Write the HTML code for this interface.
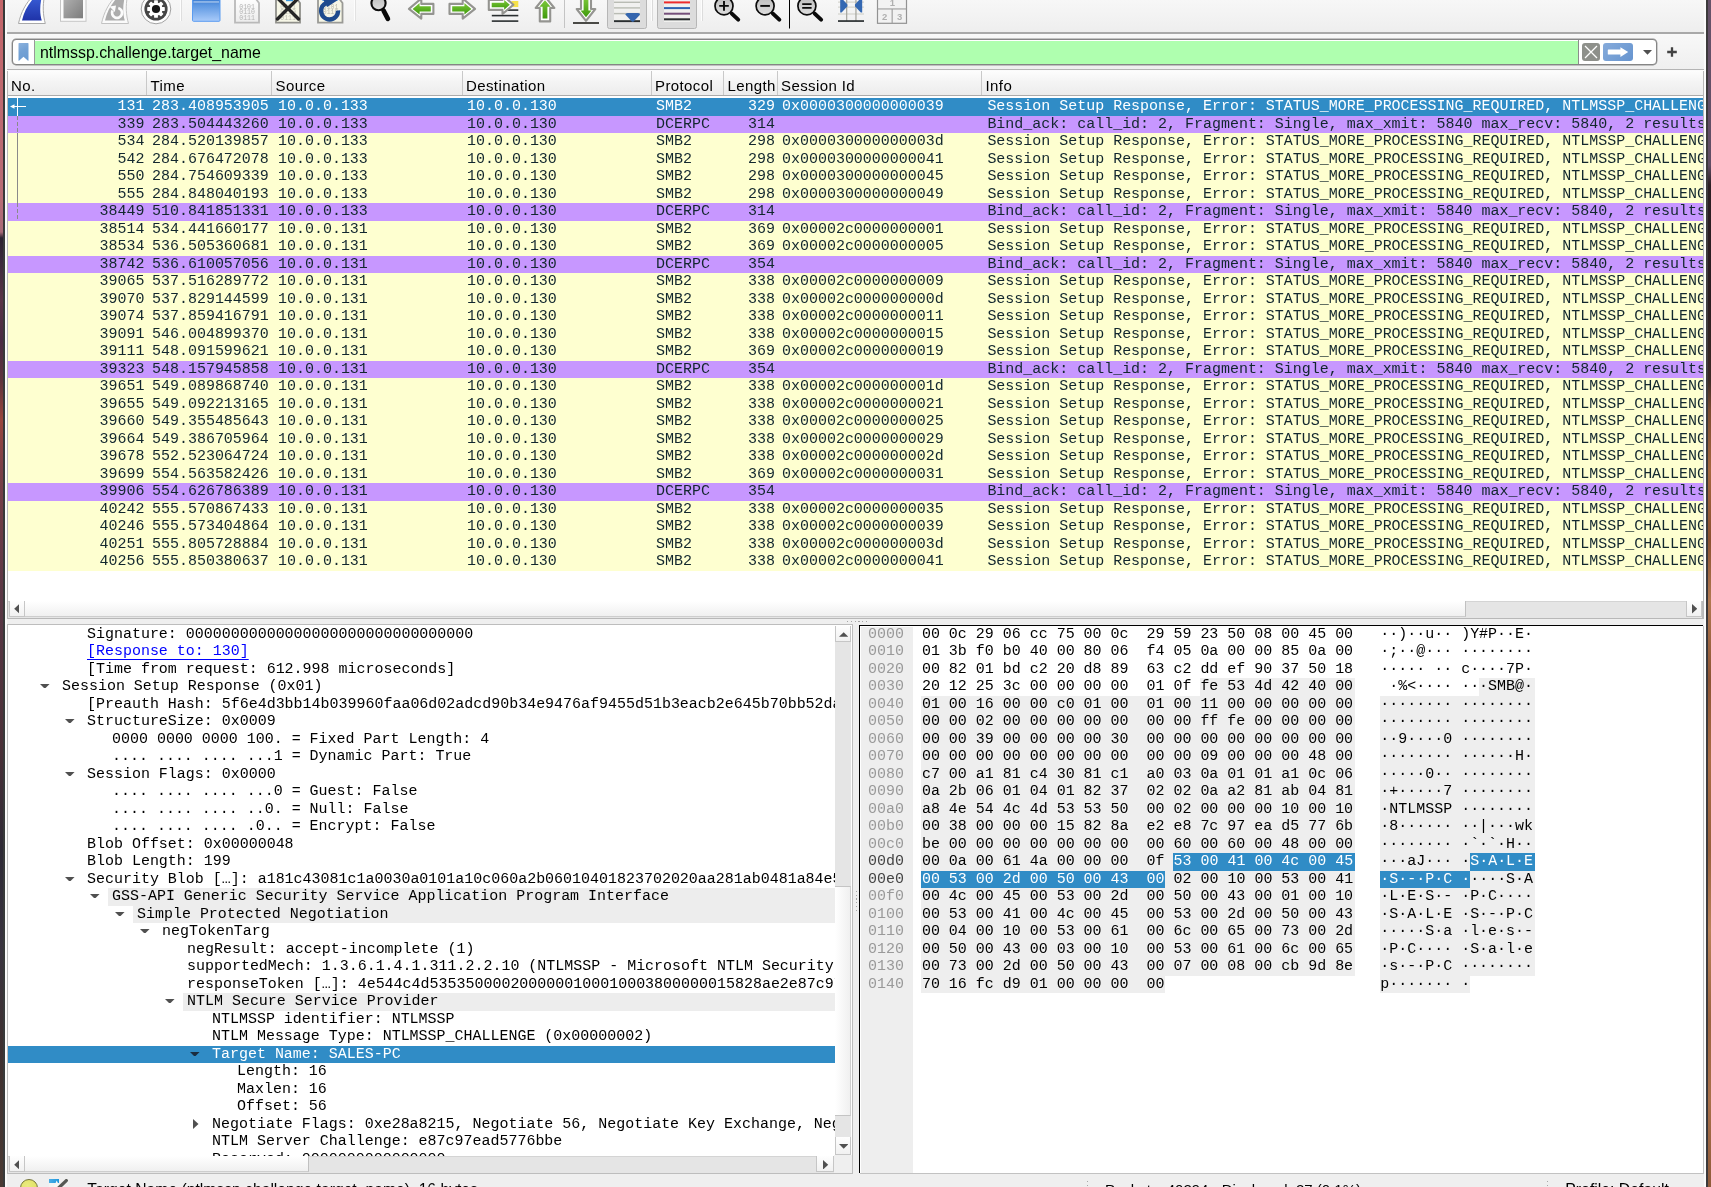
<!DOCTYPE html>
<html><head><meta charset="utf-8"><title>Wireshark</title>
<style>
*{box-sizing:border-box;margin:0;padding:0}
html,body{width:1711px;height:1187px;overflow:hidden;background:#efefef}
body{position:relative;font-family:"Liberation Sans",sans-serif;color:#000}
.abs{position:absolute}
#wl{left:0;top:0;width:3px;height:1187px;background:linear-gradient(#c4666a 0,#b86c76 200px,#a86a78 232px,#2c2232 238px,#3a2a3c 260px,#5a3448 300px,#4a2c44 340px,#5e343e 380px,#9a463e 420px,#7a4048 470px,#5a3846 600px,#4a3038 750px,#2e2a36 850px,#3a3440 950px,#3e3030 1050px,#4a3a34 1187px)}
#bl{left:3px;top:0;width:2px;height:1187px;background:#383a3a}
#bl2{left:5px;top:0;width:1.5px;height:1187px;background:#fbfbfb}
#br2{left:1704px;top:0;width:2px;height:1187px;background:#fbfbfb}
#br{left:1706px;top:0;width:2px;height:1187px;background:#3c3a3c}
#wr{left:1708px;top:0;width:3px;height:1187px;background:linear-gradient(#665269 0,#604c64 165px,#2c1e24 185px,#2a1c20 300px,#3c2a26 380px,#7a4a30 410px,#a4663e 470px,#8a5030 540px,#b07850 600px,#8c5434 680px,#a86c44 760px,#96603c 850px,#b88258 930px,#9a6440 1020px,#a8704a 1100px,#8e5a3a 1187px)}
#tb{left:5px;top:0;width:1701px;height:32px;background:linear-gradient(#f7f7f7,#eeeeee)}
#fb{left:5px;top:34.5px;width:1701px;height:34.5px;background:linear-gradient(#f8f8f8,#efefef)}
#tbl{left:7px;top:32px;width:1697px;height:1.5px;background:#a9a9a9}
#tbl2{left:7px;top:33.5px;width:1697px;height:1px;background:#f9f9f9}
#fl{left:7px;top:69px;width:1697px;height:1px;background:#b4b4b4}
#fl2{left:7px;top:70px;width:1697px;height:1px;background:#fbfbfb}
/* filter */
#fbox{left:12px;top:39px;width:1645px;height:26px;border:1px solid #858585;border-radius:4px;background:#fff;overflow:hidden;box-shadow:0 0 0 0.4px #8f8f8f}
#fgreen{left:22px;top:0.5px;width:1543px;height:23.5px;background:#afffaf}
#ftext{left:27px;top:1px;height:24px;line-height:24px;font-size:15.9px;color:#000;white-space:nowrap}
/* packet list */
#plist{left:7px;top:71px;width:1697px;height:548px;background:#fff;border-left:1px solid #b8b8b8;border-right:1px solid #b8b8b8;border-bottom:1px solid #b8b8b8}
#phead{left:0;top:0;width:1695px;height:25px;background:linear-gradient(#fdfdfd,#f4f4f4 45%,#ececec);border-bottom:1px solid #ababab}
.hc{position:absolute;top:0;height:24px;line-height:29px;font-size:15px;letter-spacing:0.4px;white-space:nowrap;padding-left:3.5px;border-left:1px solid #c9c9c9}
.pr{position:absolute;left:8px;width:1695px;overflow:hidden;font-family:"Liberation Mono",monospace;font-size:14.98px;white-space:pre}
.pr .c{position:absolute;top:0px;line-height:17px;height:18px}
.smb{background:#feffd0;color:#12272e}
.dce{background:#c797ff;color:#12272e}
.sel{background:#308cc6;color:#fff}
/* scrollbars */
.sb{background:linear-gradient(#fff,#f0f0f0)}
.sbv{background:linear-gradient(90deg,#fff,#f0f0f0)}
.thumb{background:#e4e4e4;border:1px solid #d0d0d0}
.btn{background:linear-gradient(#fefefe,#f1f1f1);border:1px solid #c6c6c6;border-top:none}
/* tree */
#tree{left:7px;top:624px;width:846px;height:550px;border:1px solid #bdbdbd;background:#fff;overflow:hidden}
#treein{left:0;top:0;width:827px;height:531px;overflow:hidden;font-family:"Liberation Mono",monospace;font-size:14.98px;white-space:pre}
.tr{position:absolute;left:0;width:827px}
.tt{position:absolute;top:0px;line-height:17px;height:18px}
.tsel{position:absolute;top:0;background:#308cc6}
.thl{position:absolute;top:0;background:#ededed}
.ta{position:absolute}
.w{color:#fff}
.lk{color:#0000ff;text-decoration:underline;text-decoration-skip-ink:none;text-underline-offset:3.7px;text-decoration-thickness:1px}
/* hex */
#hex{left:860px;top:626px;width:843px;height:547px;background:#fff;overflow:hidden}
#hexoff{left:1px;top:1px;width:52px;height:546px;background:#eeeeee}
.hr{position:absolute;left:0;width:840px;font-family:"Liberation Mono",monospace;font-size:14.98px;white-space:pre}
.hr span{position:absolute;top:0px;line-height:17px;height:18px}
.ho{color:#999}
.ho.d{color:#444}
.hp{position:absolute;top:0;background:#eeeeee}
.hs{position:absolute;top:0;background:#308cc6}
/* status */
#status{left:5px;top:1175px;width:1701px;height:12px;background:#efefef;overflow:hidden}
.st{position:absolute;font-size:15px;white-space:nowrap;line-height:18px}

#root{position:absolute;left:0;top:0;width:1711px;height:1187px;overflow:hidden;will-change:transform;transform:translateZ(0)}

#hexbt{left:858.8px;top:624.8px;width:844.4px;height:1.3px;background:#000}
#hexbl{left:858.8px;top:624.8px;width:1.3px;height:548.7px;background:#000}
#hexbr{left:1703px;top:626px;width:1px;height:548px;background:#c2c2c2}
#hexbb{left:860px;top:1173px;width:844px;height:1px;background:#c2c2c2}

.groove{background:#e5e5e5;box-shadow:inset 0 1px 0 #d4d4d4}
.slider{background:linear-gradient(#ffffff,#f0f0f0);border-right:1px solid #c0c0c0;border-bottom:1px solid #cdcdcd}
.sliderv{background:linear-gradient(90deg,#ffffff,#f0f0f0);border-top:1px solid #c4c4c4;border-bottom:1px solid #c4c4c4;border-right:1px solid #d0d0d0}

</style></head>
<body>
<div id="root">
<div id="tb" class="abs"></div><div id="fb" class="abs"></div>
<div id="tbl" class="abs"></div><div id="tbl2" class="abs"></div>
<svg class="abs" style="left:0;top:0" width="1711" height="32" viewBox="0 0 1711 32">
<defs>
<linearGradient id="gBlue" x1="0" y1="0" x2="0" y2="1"><stop offset="0" stop-color="#3a5fd8"/><stop offset="1" stop-color="#1f33a8"/></linearGradient>
<linearGradient id="gGray" x1="0" y1="0" x2="1" y2="1"><stop offset="0" stop-color="#b4b4b4"/><stop offset="1" stop-color="#7c7c7c"/></linearGradient>
<linearGradient id="gFold" x1="0" y1="0" x2="0" y2="1"><stop offset="0" stop-color="#2f73cc"/><stop offset="0.35" stop-color="#5e98e2"/><stop offset="1" stop-color="#a9cbfa"/></linearGradient>
<linearGradient id="gGreen" x1="0" y1="0" x2="0" y2="1"><stop offset="0" stop-color="#7cc83a"/><stop offset="1" stop-color="#3f9a0c"/></linearGradient>
<linearGradient id="gLens" x1="0" y1="0" x2="0" y2="1"><stop offset="0" stop-color="#bdbdbd"/><stop offset="1" stop-color="#dedede"/></linearGradient>
<linearGradient id="gPaper" x1="0" y1="0" x2="0" y2="1"><stop offset="0" stop-color="#ffffff"/><stop offset="1" stop-color="#ececec"/></linearGradient>
</defs>
<!-- 1 shark fin blue -->
<path d="M18.5 23.5 C21 12 26 3 33 -4 L44.5 -4 C42.5 6 43 15 45.3 23.5 Z" fill="#fff" stroke="#a9a9a9" stroke-width="1"/>
<path d="M22 20.5 C24 11 29 3 35.5 -4 L42 -4 C39.5 6 39.8 14 41.8 20.5 Z" fill="url(#gBlue)"/>
<!-- 2 stop -->
<rect x="60.5" y="-4" width="25.5" height="25.3" fill="#fbfbfb" stroke="#c6c6c6" stroke-width="1"/>
<rect x="63.5" y="-4" width="19.5" height="22.3" fill="url(#gGray)"/>
<!-- 3 restart fin gray -->
<path d="M101.5 23.5 C104 12 109 3 116 -4 L127.5 -4 C125.5 6 126 15 128.5 23.5 Z" fill="#fafafa" stroke="#c2c2c2" stroke-width="1"/>
<path d="M105 20.5 C107 11 112 3 118.5 -4 L125 -4 C122.5 6 122.8 14 124.8 20.5 Z" fill="#acacac"/>
<path d="M118.3 8 A5 5 0 1 1 112.6 10.5" fill="none" stroke="#fbfbfb" stroke-width="2.7"/>
<path d="M109.5 6.6 L116 5.6 L114.8 12 Z" fill="#fbfbfb"/>
<!-- 4 gear -->
<circle cx="156" cy="9" r="14.8" fill="#fdfdfd" stroke="#a2a2a2" stroke-width="1"/>
<circle cx="156" cy="9" r="11.6" fill="#454545"/>
<g fill="#fff"><circle cx="156" cy="9" r="6.6"/>
<g transform="rotate(0 156 9)"><rect x="154.1" y="0.2" width="3.8" height="4" rx="0.6"/><rect x="154.1" y="13.8" width="3.8" height="4" rx="0.6"/></g><g transform="rotate(45 156 9)"><rect x="154.1" y="0.2" width="3.8" height="4" rx="0.6"/><rect x="154.1" y="13.8" width="3.8" height="4" rx="0.6"/></g><g transform="rotate(90 156 9)"><rect x="154.1" y="0.2" width="3.8" height="4" rx="0.6"/><rect x="154.1" y="13.8" width="3.8" height="4" rx="0.6"/></g><g transform="rotate(135 156 9)"><rect x="154.1" y="0.2" width="3.8" height="4" rx="0.6"/><rect x="154.1" y="13.8" width="3.8" height="4" rx="0.6"/></g></g>
<circle cx="156" cy="9" r="4.1" fill="#161616"/>
<!-- separators -->
<rect x="180" y="0" width="1" height="21" fill="#fdfdfd"/><rect x="181" y="0" width="1" height="21" fill="#dedede"/>
<!-- 5 open folder -->
<rect x="192.5" y="-3" width="27.5" height="24.3" rx="1" fill="url(#gFold)" stroke="#5b9cf0" stroke-width="1"/>
<rect x="193.5" y="1.3" width="25.5" height="1.3" fill="#b4cdf0" opacity="0.9"/>
<!-- 6 save (disabled) -->
<path d="M235 -3 V22.7 H259 V3 L256 -1 Z" fill="url(#gPaper)" stroke="#b9b9b9" stroke-width="1.8"/>
<g font-family="Liberation Mono, monospace" font-size="6.5" fill="#b4b4b4"><text x="239.3" y="8.8">0101</text><text x="239.3" y="14.3">0110</text><text x="239.3" y="19.8">0111</text></g>
<!-- 7 close -->
<path d="M276 -3 V22.7 H300 V3 L297 -1 Z" fill="#f6f6e6" stroke="#8f8f8a" stroke-width="1.8"/>
<rect x="286" y="-1" width="7" height="2.2" fill="#3a96dc"/>
<g font-family="Liberation Mono, monospace" font-size="6.5" fill="#bdbdb0"><text x="280.3" y="8.8">0101</text><text x="280.3" y="14.3">0110</text><text x="280.3" y="19.8">0111</text></g>
<path d="M277 -2.5 L298.5 19 M299 -2.5 L277.5 19" stroke="#262626" stroke-width="3.4" stroke-linecap="round"/>
<!-- 8 reload -->
<path d="M318 -3 V22.7 H342.5 V3 L339.5 -1 Z" fill="#f6f6e6" stroke="#9a9a96" stroke-width="1.8"/>
<rect x="322" y="-1" width="16" height="1.8" fill="#6ab4ea"/>
<g font-family="Liberation Mono, monospace" font-size="6.5" fill="#b9b9ac"><text x="322.8" y="8.8">0101</text><text x="322.8" y="14.3">0110</text></g>
<path d="M338.1 10.5 A8.5 8.5 0 0 1 329.6 19.5 A8.5 8.5 0 0 1 321.1 11 A8.5 8.5 0 0 1 326.7 3.0" fill="none" stroke="#1e4b8e" stroke-width="4.3"/>
<path d="M337.2 0.6 L327.2 6.9 L321.5 -3 L334 -3 Z" fill="#1e4b8e"/>
<rect x="354" y="0" width="1" height="21" fill="#fdfdfd"/><rect x="355" y="0" width="1" height="21" fill="#e2e2e2"/>
<!-- 9 find -->
<circle cx="378.5" cy="3.2" r="7.1" fill="url(#gLens)" stroke="#0c0c0c" stroke-width="2.1"/>
<path d="M383.6 10.6 L387.9 18.9" stroke="#0a0a0a" stroke-width="4.7" stroke-linecap="round"/>
<!-- 10 back -->
<path d="M409 8.9 L421.3 -1.5 V3.9 H433.4 V13.9 H421.3 V18.6 Z" fill="#fff" stroke="#949490" stroke-width="2.1" stroke-linejoin="round"/>
<path d="M412.6 8.9 L419.6 3 V6.3 H430.8 V11.5 H419.6 V14.6 Z" fill="url(#gGreen)"/>
<!-- 11 forward -->
<path d="M475 8.9 L462.7 -1.5 V3.9 H449.5 V13.9 H462.7 V18.6 Z" fill="#fff" stroke="#949490" stroke-width="2.1" stroke-linejoin="round"/>
<path d="M471.4 8.9 L464.4 3 V6.3 H452.2 V11.5 H464.4 V14.6 Z" fill="url(#gGreen)"/>
<!-- 12 goto -->
<rect x="511.5" y="1" width="6.8" height="6" fill="#f6e24a"/>
<rect x="507" y="9.3" width="11.3" height="1.6" fill="#2a2e30"/>
<rect x="491.8" y="14.8" width="26.5" height="1.6" fill="#2a2e30"/>
<rect x="491.8" y="20.3" width="26.5" height="1.6" fill="#2a2e30"/>
<path d="M513.4 4.8 L502.5 14 V9.9 H488.8 V0 H502.5 V-5 Z" fill="#fff" stroke="#949490" stroke-width="2.1" stroke-linejoin="round"/>
<path d="M509.8 4.8 L504.2 0 V2.7 H491.7 V7.2 H504.2 V9.8 Z" fill="url(#gGreen)"/>
<!-- 13 go first (up) -->
<path d="M545 -3.5 L554.3 8 H550.2 V21.4 H539.8 V8 H535.7 Z" fill="#fff" stroke="#949490" stroke-width="2.1" stroke-linejoin="round"/>
<path d="M545 0.2 L550.6 6.8 H547.4 V18.4 H542.6 V6.8 H539.4 Z" fill="url(#gGreen)"/>
<rect x="564" y="0" width="1" height="28" fill="#c4c4c4"/>
<!-- 14 go last (down) -->
<path d="M586 20.8 L595.3 9 H591 V-2 H581 V9 H576.7 Z" fill="#fff" stroke="#949490" stroke-width="2.1" stroke-linejoin="round"/>
<path d="M586 17.2 L591.5 10.6 H588.4 V-2 H583.6 V10.6 H580.5 Z" fill="url(#gGreen)"/>
<rect x="573" y="22" width="26" height="2" fill="#4a4a46"/>
<!-- 15 autoscroll pressed -->
<path d="M607.5 -2 V26.5 Q607.5 28.5 609.5 28.5 H644.5 Q646.5 28.5 646.5 26.5 V-2 Z" fill="#dcdcdc" stroke="#b6b6b6" stroke-width="1"/>
<rect x="614" y="-2" width="26" height="24" fill="#f1f1ef"/>
<rect x="614" y="1.6" width="26" height="1.4" fill="#b9bcb4"/><rect x="614" y="7.2" width="26" height="1.4" fill="#b9bcb4"/><rect x="614" y="12.9" width="26" height="1.4" fill="#b9bcb4"/>
<rect x="614" y="20.2" width="26" height="1.9" fill="#2a2e30"/>
<path d="M625.3 14.6 Q625.6 13 627.5 13 H638 Q640 13 640 14.8 L633.6 21.4 Q632.7 22 631.8 21.4 Z" fill="#3566ae"/>
<rect x="651" y="0" width="1" height="21" fill="#fdfdfd"/><rect x="652" y="0" width="1" height="21" fill="#dadada"/>
<!-- 16 colorize pressed -->
<path d="M657.5 -2 V26.5 Q657.5 28.5 659.5 28.5 H694.5 Q696.5 28.5 696.5 26.5 V-2 Z" fill="#dcdcdc" stroke="#b6b6b6" stroke-width="1"/>
<rect x="664" y="-2" width="26" height="24" fill="#f1f1ef"/>
<rect x="664" y="1.4" width="26" height="2" fill="#ee2c2c"/><rect x="664" y="7.1" width="26" height="2" fill="#2f62b0"/><rect x="664" y="12.7" width="26" height="2" fill="#75507b"/><rect x="664" y="18.3" width="26" height="2" fill="#2a2e30"/>
<rect x="701" y="0" width="1" height="21" fill="#fdfdfd"/><rect x="702" y="0" width="1" height="21" fill="#dcdcdc"/>
<!-- 17 zoom in -->
<circle cx="724" cy="5.9" r="9" fill="url(#gLens)" stroke="#0c0c0c" stroke-width="1.7"/>
<path d="M719.2 5.9 H728.8 M724 1.1 V10.7" stroke="#0a0a0a" stroke-width="1.9"/>
<path d="M731.8 13.6 L738.2 19.6" stroke="#0a0a0a" stroke-width="4" stroke-linecap="round"/>
<!-- 18 zoom out -->
<circle cx="765.1" cy="5.9" r="9" fill="url(#gLens)" stroke="#0c0c0c" stroke-width="1.7"/>
<path d="M760.3 5.9 H769.9" stroke="#0a0a0a" stroke-width="1.9"/>
<path d="M772.9 13.6 L779.3 19.6" stroke="#0a0a0a" stroke-width="4" stroke-linecap="round"/>
<rect x="789" y="0" width="1" height="28.5" fill="#000"/>
<!-- 19 zoom 1:1 -->
<circle cx="806.9" cy="5.9" r="9" fill="url(#gLens)" stroke="#0c0c0c" stroke-width="1.7"/>
<path d="M802.2 4.1 H811.6 M802.2 7.9 H811.6" stroke="#0a0a0a" stroke-width="1.8"/>
<path d="M814.7 13.6 L821.1 19.6" stroke="#0a0a0a" stroke-width="4" stroke-linecap="round"/>
<!-- 20 resize columns -->
<g fill="#cdcdc6"><rect x="838" y="1.6" width="26" height="1"/><rect x="838" y="6.6" width="26" height="1"/><rect x="838" y="13.5" width="26" height="1"/></g>
<rect x="846" y="-1" width="1.3" height="22" fill="#a9a9a2"/><rect x="855.3" y="-1" width="1.3" height="22" fill="#a9a9a2"/>
<rect x="838" y="20.2" width="26" height="1.7" fill="#2a2e30"/>
<path d="M840.2 -2 H841.5 L847.4 4.5 Q847.6 5.6 847.2 6.6 L841.6 12.6 H840.2 Z" fill="#3468b2"/>
<path d="M862.2 -2 H860.9 L855 4.5 Q854.8 5.6 855.2 6.6 L860.8 12.6 H862.2 Z" fill="#3468b2"/>
<!-- 21 layout -->
<rect x="877.5" y="-2" width="29" height="25.3" fill="#f2f2f2" stroke="#929292" stroke-width="1.2"/>
<rect x="877.5" y="8.4" width="29" height="1.1" fill="#9c9c9c"/><rect x="891.6" y="9" width="1.1" height="14" fill="#9c9c9c"/>
<g font-family="Liberation Sans, sans-serif" font-size="9.5" font-weight="bold" fill="#b0b0b0"><text x="889.8" y="5.6">1</text><text x="882" y="20.2">2</text><text x="897" y="20.2">3</text></g>
</svg>

<div id="fbox" class="abs">
  <div id="fgreen" class="abs"></div><div class="abs" style="left:21px;top:0;width:1px;height:24px;background:#9a9a9a"></div>
  <svg class="abs" style="left:5px;top:3px" width="11" height="18" viewBox="0 0 11 18"><defs><linearGradient id="gBm" x1="0" y1="0" x2="0.3" y2="1"><stop offset="0" stop-color="#8db2dd"/><stop offset="0.5" stop-color="#74a2d5"/><stop offset="1" stop-color="#6c9cd2"/></linearGradient></defs><path d="M1.1 0 H9.9 Q10.5 0 10.5 0.6 V17.2 Q10.5 18.2 9.7 17.6 L5.5 13.8 L1.3 17.6 Q0.5 18.2 0.5 17.2 V0.6 Q0.5 0 1.1 0 Z" fill="url(#gBm)"/></svg>
  <div id="ftext" class="abs">ntlmssp.challenge.target_name</div>
  <div class="abs" style="left:1565px;top:0;width:1px;height:24px;background:#8c8c8c"></div>
  <div class="abs" style="left:1569px;top:3px;width:18px;height:18px;border-radius:3px;background:#8e908b"></div>
  <svg class="abs" style="left:1569px;top:3px" width="18" height="18" viewBox="0 0 18 18"><path d="M3 3 L15 15 M15 3 L3 15" stroke="#fff" stroke-width="1.3" fill="none"/></svg>
  <div class="abs" style="left:1590px;top:3px;width:30px;height:18px;border-radius:3px;background:linear-gradient(135deg,#86abdb,#6694cf)"></div>
  <svg class="abs" style="left:1590px;top:3px" width="30" height="18" viewBox="0 0 30 18"><path d="M5.3 6.4 H17.4 V4.2 L25.2 9 L17.4 13.9 V11.6 H5.3 Q4.8 11.6 4.8 11.1 V6.9 Q4.8 6.4 5.3 6.4 Z" fill="#fff"/></svg>
  <svg class="abs" style="left:1630px;top:10px" width="9" height="5" viewBox="0 0 9 5"><path d="M0 0 H9 L4.5 4.8 Z" fill="#505050"/></svg>
</div>
<svg class="abs" style="left:1666px;top:46px" width="12" height="12" viewBox="0 0 12 12"><path d="M6 1.2 V10.8 M1.2 6 H10.8" stroke="#424242" stroke-width="2.3" fill="none"/></svg>
<div id="fl" class="abs"></div><div id="fl2" class="abs"></div>

<div id="plist" class="abs">
  <div id="phead" class="abs">
    <div class="hc" style="left:0;border-left:none;padding-left:3px">No.</div>
    <div class="hc" style="left:138px">Time</div>
    <div class="hc" style="left:263px">Source</div>
    <div class="hc" style="left:453.5px">Destination</div>
    <div class="hc" style="left:642.5px">Protocol</div>
    <div class="hc" style="left:715px">Length</div>
    <div class="hc" style="left:768.5px">Session Id</div>
    <div class="hc" style="left:973px">Info</div>
  </div>
</div>
<div class="pr sel" style="top:98px;height:18px"><span class="c" style="left:0;width:136.5px;text-align:right">131</span><span class="c" style="left:144px">283.408953905</span><span class="c" style="left:270px">10.0.0.133</span><span class="c" style="left:459px">10.0.0.130</span><span class="c" style="left:648px">SMB2</span><span class="c" style="left:714px;width:53px;text-align:right">329</span><span class="c" style="left:774px">0x0000300000000039</span><span class="c" style="left:979.4px">Session Setup Response, Error: STATUS_MORE_PROCESSING_REQUIRED, NTLMSSP_CHALLENGE</span></div>
<div class="pr dce" style="top:116px;height:17px"><span class="c" style="left:0;width:136.5px;text-align:right">339</span><span class="c" style="left:144px">283.504443260</span><span class="c" style="left:270px">10.0.0.133</span><span class="c" style="left:459px">10.0.0.130</span><span class="c" style="left:648px">DCERPC</span><span class="c" style="left:714px;width:53px;text-align:right">314</span><span class="c" style="left:774px"></span><span class="c" style="left:979.4px">Bind_ack: call_id: 2, Fragment: Single, max_xmit: 5840 max_recv: 5840, 2 results: Acceptance</span></div>
<div class="pr smb" style="top:133px;height:18px"><span class="c" style="left:0;width:136.5px;text-align:right">534</span><span class="c" style="left:144px">284.520139857</span><span class="c" style="left:270px">10.0.0.133</span><span class="c" style="left:459px">10.0.0.130</span><span class="c" style="left:648px">SMB2</span><span class="c" style="left:714px;width:53px;text-align:right">298</span><span class="c" style="left:774px">0x000030000000003d</span><span class="c" style="left:979.4px">Session Setup Response, Error: STATUS_MORE_PROCESSING_REQUIRED, NTLMSSP_CHALLENGE</span></div>
<div class="pr smb" style="top:151px;height:17px"><span class="c" style="left:0;width:136.5px;text-align:right">542</span><span class="c" style="left:144px">284.676472078</span><span class="c" style="left:270px">10.0.0.133</span><span class="c" style="left:459px">10.0.0.130</span><span class="c" style="left:648px">SMB2</span><span class="c" style="left:714px;width:53px;text-align:right">298</span><span class="c" style="left:774px">0x0000300000000041</span><span class="c" style="left:979.4px">Session Setup Response, Error: STATUS_MORE_PROCESSING_REQUIRED, NTLMSSP_CHALLENGE</span></div>
<div class="pr smb" style="top:168px;height:18px"><span class="c" style="left:0;width:136.5px;text-align:right">550</span><span class="c" style="left:144px">284.754609339</span><span class="c" style="left:270px">10.0.0.133</span><span class="c" style="left:459px">10.0.0.130</span><span class="c" style="left:648px">SMB2</span><span class="c" style="left:714px;width:53px;text-align:right">298</span><span class="c" style="left:774px">0x0000300000000045</span><span class="c" style="left:979.4px">Session Setup Response, Error: STATUS_MORE_PROCESSING_REQUIRED, NTLMSSP_CHALLENGE</span></div>
<div class="pr smb" style="top:186px;height:17px"><span class="c" style="left:0;width:136.5px;text-align:right">555</span><span class="c" style="left:144px">284.848040193</span><span class="c" style="left:270px">10.0.0.133</span><span class="c" style="left:459px">10.0.0.130</span><span class="c" style="left:648px">SMB2</span><span class="c" style="left:714px;width:53px;text-align:right">298</span><span class="c" style="left:774px">0x0000300000000049</span><span class="c" style="left:979.4px">Session Setup Response, Error: STATUS_MORE_PROCESSING_REQUIRED, NTLMSSP_CHALLENGE</span></div>
<div class="pr dce" style="top:203px;height:18px"><span class="c" style="left:0;width:136.5px;text-align:right">38449</span><span class="c" style="left:144px">510.841851331</span><span class="c" style="left:270px">10.0.0.133</span><span class="c" style="left:459px">10.0.0.130</span><span class="c" style="left:648px">DCERPC</span><span class="c" style="left:714px;width:53px;text-align:right">314</span><span class="c" style="left:774px"></span><span class="c" style="left:979.4px">Bind_ack: call_id: 2, Fragment: Single, max_xmit: 5840 max_recv: 5840, 2 results: Acceptance</span></div>
<div class="pr smb" style="top:221px;height:17px"><span class="c" style="left:0;width:136.5px;text-align:right">38514</span><span class="c" style="left:144px">534.441660177</span><span class="c" style="left:270px">10.0.0.131</span><span class="c" style="left:459px">10.0.0.130</span><span class="c" style="left:648px">SMB2</span><span class="c" style="left:714px;width:53px;text-align:right">369</span><span class="c" style="left:774px">0x00002c0000000001</span><span class="c" style="left:979.4px">Session Setup Response, Error: STATUS_MORE_PROCESSING_REQUIRED, NTLMSSP_CHALLENGE</span></div>
<div class="pr smb" style="top:238px;height:18px"><span class="c" style="left:0;width:136.5px;text-align:right">38534</span><span class="c" style="left:144px">536.505360681</span><span class="c" style="left:270px">10.0.0.131</span><span class="c" style="left:459px">10.0.0.130</span><span class="c" style="left:648px">SMB2</span><span class="c" style="left:714px;width:53px;text-align:right">369</span><span class="c" style="left:774px">0x00002c0000000005</span><span class="c" style="left:979.4px">Session Setup Response, Error: STATUS_MORE_PROCESSING_REQUIRED, NTLMSSP_CHALLENGE</span></div>
<div class="pr dce" style="top:256px;height:17px"><span class="c" style="left:0;width:136.5px;text-align:right">38742</span><span class="c" style="left:144px">536.610057056</span><span class="c" style="left:270px">10.0.0.131</span><span class="c" style="left:459px">10.0.0.130</span><span class="c" style="left:648px">DCERPC</span><span class="c" style="left:714px;width:53px;text-align:right">354</span><span class="c" style="left:774px"></span><span class="c" style="left:979.4px">Bind_ack: call_id: 2, Fragment: Single, max_xmit: 5840 max_recv: 5840, 2 results: Acceptance</span></div>
<div class="pr smb" style="top:273px;height:18px"><span class="c" style="left:0;width:136.5px;text-align:right">39065</span><span class="c" style="left:144px">537.516289772</span><span class="c" style="left:270px">10.0.0.131</span><span class="c" style="left:459px">10.0.0.130</span><span class="c" style="left:648px">SMB2</span><span class="c" style="left:714px;width:53px;text-align:right">338</span><span class="c" style="left:774px">0x00002c0000000009</span><span class="c" style="left:979.4px">Session Setup Response, Error: STATUS_MORE_PROCESSING_REQUIRED, NTLMSSP_CHALLENGE</span></div>
<div class="pr smb" style="top:291px;height:17px"><span class="c" style="left:0;width:136.5px;text-align:right">39070</span><span class="c" style="left:144px">537.829144599</span><span class="c" style="left:270px">10.0.0.131</span><span class="c" style="left:459px">10.0.0.130</span><span class="c" style="left:648px">SMB2</span><span class="c" style="left:714px;width:53px;text-align:right">338</span><span class="c" style="left:774px">0x00002c000000000d</span><span class="c" style="left:979.4px">Session Setup Response, Error: STATUS_MORE_PROCESSING_REQUIRED, NTLMSSP_CHALLENGE</span></div>
<div class="pr smb" style="top:308px;height:18px"><span class="c" style="left:0;width:136.5px;text-align:right">39074</span><span class="c" style="left:144px">537.859416791</span><span class="c" style="left:270px">10.0.0.131</span><span class="c" style="left:459px">10.0.0.130</span><span class="c" style="left:648px">SMB2</span><span class="c" style="left:714px;width:53px;text-align:right">338</span><span class="c" style="left:774px">0x00002c0000000011</span><span class="c" style="left:979.4px">Session Setup Response, Error: STATUS_MORE_PROCESSING_REQUIRED, NTLMSSP_CHALLENGE</span></div>
<div class="pr smb" style="top:326px;height:17px"><span class="c" style="left:0;width:136.5px;text-align:right">39091</span><span class="c" style="left:144px">546.004899370</span><span class="c" style="left:270px">10.0.0.131</span><span class="c" style="left:459px">10.0.0.130</span><span class="c" style="left:648px">SMB2</span><span class="c" style="left:714px;width:53px;text-align:right">338</span><span class="c" style="left:774px">0x00002c0000000015</span><span class="c" style="left:979.4px">Session Setup Response, Error: STATUS_MORE_PROCESSING_REQUIRED, NTLMSSP_CHALLENGE</span></div>
<div class="pr smb" style="top:343px;height:18px"><span class="c" style="left:0;width:136.5px;text-align:right">39111</span><span class="c" style="left:144px">548.091599621</span><span class="c" style="left:270px">10.0.0.131</span><span class="c" style="left:459px">10.0.0.130</span><span class="c" style="left:648px">SMB2</span><span class="c" style="left:714px;width:53px;text-align:right">369</span><span class="c" style="left:774px">0x00002c0000000019</span><span class="c" style="left:979.4px">Session Setup Response, Error: STATUS_MORE_PROCESSING_REQUIRED, NTLMSSP_CHALLENGE</span></div>
<div class="pr dce" style="top:361px;height:17px"><span class="c" style="left:0;width:136.5px;text-align:right">39323</span><span class="c" style="left:144px">548.157945858</span><span class="c" style="left:270px">10.0.0.131</span><span class="c" style="left:459px">10.0.0.130</span><span class="c" style="left:648px">DCERPC</span><span class="c" style="left:714px;width:53px;text-align:right">354</span><span class="c" style="left:774px"></span><span class="c" style="left:979.4px">Bind_ack: call_id: 2, Fragment: Single, max_xmit: 5840 max_recv: 5840, 2 results: Acceptance</span></div>
<div class="pr smb" style="top:378px;height:18px"><span class="c" style="left:0;width:136.5px;text-align:right">39651</span><span class="c" style="left:144px">549.089868740</span><span class="c" style="left:270px">10.0.0.131</span><span class="c" style="left:459px">10.0.0.130</span><span class="c" style="left:648px">SMB2</span><span class="c" style="left:714px;width:53px;text-align:right">338</span><span class="c" style="left:774px">0x00002c000000001d</span><span class="c" style="left:979.4px">Session Setup Response, Error: STATUS_MORE_PROCESSING_REQUIRED, NTLMSSP_CHALLENGE</span></div>
<div class="pr smb" style="top:396px;height:17px"><span class="c" style="left:0;width:136.5px;text-align:right">39655</span><span class="c" style="left:144px">549.092213165</span><span class="c" style="left:270px">10.0.0.131</span><span class="c" style="left:459px">10.0.0.130</span><span class="c" style="left:648px">SMB2</span><span class="c" style="left:714px;width:53px;text-align:right">338</span><span class="c" style="left:774px">0x00002c0000000021</span><span class="c" style="left:979.4px">Session Setup Response, Error: STATUS_MORE_PROCESSING_REQUIRED, NTLMSSP_CHALLENGE</span></div>
<div class="pr smb" style="top:413px;height:18px"><span class="c" style="left:0;width:136.5px;text-align:right">39660</span><span class="c" style="left:144px">549.355485643</span><span class="c" style="left:270px">10.0.0.131</span><span class="c" style="left:459px">10.0.0.130</span><span class="c" style="left:648px">SMB2</span><span class="c" style="left:714px;width:53px;text-align:right">338</span><span class="c" style="left:774px">0x00002c0000000025</span><span class="c" style="left:979.4px">Session Setup Response, Error: STATUS_MORE_PROCESSING_REQUIRED, NTLMSSP_CHALLENGE</span></div>
<div class="pr smb" style="top:431px;height:17px"><span class="c" style="left:0;width:136.5px;text-align:right">39664</span><span class="c" style="left:144px">549.386705964</span><span class="c" style="left:270px">10.0.0.131</span><span class="c" style="left:459px">10.0.0.130</span><span class="c" style="left:648px">SMB2</span><span class="c" style="left:714px;width:53px;text-align:right">338</span><span class="c" style="left:774px">0x00002c0000000029</span><span class="c" style="left:979.4px">Session Setup Response, Error: STATUS_MORE_PROCESSING_REQUIRED, NTLMSSP_CHALLENGE</span></div>
<div class="pr smb" style="top:448px;height:18px"><span class="c" style="left:0;width:136.5px;text-align:right">39678</span><span class="c" style="left:144px">552.523064724</span><span class="c" style="left:270px">10.0.0.131</span><span class="c" style="left:459px">10.0.0.130</span><span class="c" style="left:648px">SMB2</span><span class="c" style="left:714px;width:53px;text-align:right">338</span><span class="c" style="left:774px">0x00002c000000002d</span><span class="c" style="left:979.4px">Session Setup Response, Error: STATUS_MORE_PROCESSING_REQUIRED, NTLMSSP_CHALLENGE</span></div>
<div class="pr smb" style="top:466px;height:17px"><span class="c" style="left:0;width:136.5px;text-align:right">39699</span><span class="c" style="left:144px">554.563582426</span><span class="c" style="left:270px">10.0.0.131</span><span class="c" style="left:459px">10.0.0.130</span><span class="c" style="left:648px">SMB2</span><span class="c" style="left:714px;width:53px;text-align:right">369</span><span class="c" style="left:774px">0x00002c0000000031</span><span class="c" style="left:979.4px">Session Setup Response, Error: STATUS_MORE_PROCESSING_REQUIRED, NTLMSSP_CHALLENGE</span></div>
<div class="pr dce" style="top:483px;height:18px"><span class="c" style="left:0;width:136.5px;text-align:right">39906</span><span class="c" style="left:144px">554.626786389</span><span class="c" style="left:270px">10.0.0.131</span><span class="c" style="left:459px">10.0.0.130</span><span class="c" style="left:648px">DCERPC</span><span class="c" style="left:714px;width:53px;text-align:right">354</span><span class="c" style="left:774px"></span><span class="c" style="left:979.4px">Bind_ack: call_id: 2, Fragment: Single, max_xmit: 5840 max_recv: 5840, 2 results: Acceptance</span></div>
<div class="pr smb" style="top:501px;height:17px"><span class="c" style="left:0;width:136.5px;text-align:right">40242</span><span class="c" style="left:144px">555.570867433</span><span class="c" style="left:270px">10.0.0.131</span><span class="c" style="left:459px">10.0.0.130</span><span class="c" style="left:648px">SMB2</span><span class="c" style="left:714px;width:53px;text-align:right">338</span><span class="c" style="left:774px">0x00002c0000000035</span><span class="c" style="left:979.4px">Session Setup Response, Error: STATUS_MORE_PROCESSING_REQUIRED, NTLMSSP_CHALLENGE</span></div>
<div class="pr smb" style="top:518px;height:18px"><span class="c" style="left:0;width:136.5px;text-align:right">40246</span><span class="c" style="left:144px">555.573404864</span><span class="c" style="left:270px">10.0.0.131</span><span class="c" style="left:459px">10.0.0.130</span><span class="c" style="left:648px">SMB2</span><span class="c" style="left:714px;width:53px;text-align:right">338</span><span class="c" style="left:774px">0x00002c0000000039</span><span class="c" style="left:979.4px">Session Setup Response, Error: STATUS_MORE_PROCESSING_REQUIRED, NTLMSSP_CHALLENGE</span></div>
<div class="pr smb" style="top:536px;height:17px"><span class="c" style="left:0;width:136.5px;text-align:right">40251</span><span class="c" style="left:144px">555.805728884</span><span class="c" style="left:270px">10.0.0.131</span><span class="c" style="left:459px">10.0.0.130</span><span class="c" style="left:648px">SMB2</span><span class="c" style="left:714px;width:53px;text-align:right">338</span><span class="c" style="left:774px">0x00002c000000003d</span><span class="c" style="left:979.4px">Session Setup Response, Error: STATUS_MORE_PROCESSING_REQUIRED, NTLMSSP_CHALLENGE</span></div>
<div class="pr smb" style="top:553px;height:18px"><span class="c" style="left:0;width:136.5px;text-align:right">40256</span><span class="c" style="left:144px">555.850380637</span><span class="c" style="left:270px">10.0.0.131</span><span class="c" style="left:459px">10.0.0.130</span><span class="c" style="left:648px">SMB2</span><span class="c" style="left:714px;width:53px;text-align:right">338</span><span class="c" style="left:774px">0x00002c0000000041</span><span class="c" style="left:979.4px">Session Setup Response, Error: STATUS_MORE_PROCESSING_REQUIRED, NTLMSSP_CHALLENGE</span></div>
<!-- related-packet marks -->
<div class="abs" style="left:17px;top:98px;width:1px;height:18px;background:#fff"></div>
<div class="abs" style="left:11px;top:106px;width:15px;height:1px;background:#fff"></div>
<svg class="abs" style="left:9.5px;top:104px" width="5" height="5" viewBox="0 0 5 5"><path d="M0 2.5 L4.5 0.3 V4.7 Z" fill="#fff"/></svg>
<div class="abs" style="left:17px;top:116px;width:1px;height:17px;background:repeating-linear-gradient(#8a8a8a 0 4px,transparent 4px 6px)"></div>
<div class="abs" style="left:17px;top:133px;width:1px;height:70px;background:#8a8a8a"></div>
<div class="abs" style="left:17px;top:203px;width:1px;height:17px;background:repeating-linear-gradient(#8a8a8a 0 4px,transparent 4px 6px)"></div>

<!-- packet list hscroll -->
<div class="abs groove" style="left:8px;top:601px;width:1695px;height:17px"></div>
<div class="abs slider" style="left:24.5px;top:601px;width:1441px;height:15.6px"></div>
<div class="abs btn" style="left:8.5px;top:601px;width:16.5px;height:15.6px"></div>
<svg class="abs" style="left:13.6px;top:604.3px" width="5.4" height="9.6" viewBox="0 0 5.4 9.6"><path d="M5.4 0 V9.6 L0.2 4.8 Z" fill="#505050"/></svg>
<div class="abs btn" style="left:1685.5px;top:601px;width:16px;height:15.6px"></div>
<svg class="abs" style="left:1691.9px;top:604.3px" width="5.4" height="9.6" viewBox="0 0 5.4 9.6"><path d="M0 0 V9.6 L5.2 4.8 Z" fill="#505050"/></svg>
<div class="abs" style="left:1701.5px;top:601px;width:1.5px;height:17px;background:#bcbcbc"></div>

<!-- splitter handles -->
<div class="abs" style="left:846.5px;top:621px;width:21px;height:1px;background:repeating-linear-gradient(90deg,#a6a6a6 0 1.2px,transparent 1.2px 3.8px)"></div>
<div class="abs" style="left:856px;top:891px;width:1px;height:20.5px;background:repeating-linear-gradient(#a6a6a6 0 1.2px,transparent 1.2px 3.75px)"></div>

<!-- tree -->
<div id="tree" class="abs"><div class="abs" style="left:0;top:1px;width:844px;height:548px">
  <div id="treein" class="abs">
<div class="tr" style="top:0px;height:17px"><span class="tt" style="left:79px">Signature: 00000000000000000000000000000000</span></div>
<div class="tr" style="top:17px;height:18px"><span class="tt lk" style="left:79px">[Response to: 130]</span></div>
<div class="tr" style="top:35px;height:17px"><span class="tt" style="left:79px">[Time from request: 612.998 microseconds]</span></div>
<div class="tr" style="top:52px;height:18px"><svg class="ta" style="left:32.2px;top:6px" width="9.6" height="4.4" viewBox="0 0 9.6 4.4"><path d="M0 0 H9.6 L5.4 4.2 Q4.8 4.6 4.2 4.2 Z" fill="#505050"/></svg><span class="tt" style="left:54px">Session Setup Response (0x01)</span></div>
<div class="tr" style="top:70px;height:17px"><span class="tt" style="left:79px">[Preauth Hash: 5f6e4d3bb14b039960faa06d02adcd90b34e9476af9455d51b3eacb2e645b70bb52da7c3]</span></div>
<div class="tr" style="top:87px;height:18px"><svg class="ta" style="left:57.2px;top:6px" width="9.6" height="4.4" viewBox="0 0 9.6 4.4"><path d="M0 0 H9.6 L5.4 4.2 Q4.8 4.6 4.2 4.2 Z" fill="#505050"/></svg><span class="tt" style="left:79px">StructureSize: 0x0009</span></div>
<div class="tr" style="top:105px;height:17px"><span class="tt" style="left:104px">0000 0000 0000 100. = Fixed Part Length: 4</span></div>
<div class="tr" style="top:122px;height:18px"><span class="tt" style="left:104px">.... .... .... ...1 = Dynamic Part: True</span></div>
<div class="tr" style="top:140px;height:17px"><svg class="ta" style="left:57.2px;top:6px" width="9.6" height="4.4" viewBox="0 0 9.6 4.4"><path d="M0 0 H9.6 L5.4 4.2 Q4.8 4.6 4.2 4.2 Z" fill="#505050"/></svg><span class="tt" style="left:79px">Session Flags: 0x0000</span></div>
<div class="tr" style="top:157px;height:18px"><span class="tt" style="left:104px">.... .... .... ...0 = Guest: False</span></div>
<div class="tr" style="top:175px;height:17px"><span class="tt" style="left:104px">.... .... .... ..0. = Null: False</span></div>
<div class="tr" style="top:192px;height:18px"><span class="tt" style="left:104px">.... .... .... .0.. = Encrypt: False</span></div>
<div class="tr" style="top:210px;height:17px"><span class="tt" style="left:79px">Blob Offset: 0x00000048</span></div>
<div class="tr" style="top:227px;height:18px"><span class="tt" style="left:79px">Blob Length: 199</span></div>
<div class="tr" style="top:245px;height:17px"><svg class="ta" style="left:57.2px;top:6px" width="9.6" height="4.4" viewBox="0 0 9.6 4.4"><path d="M0 0 H9.6 L5.4 4.2 Q4.8 4.6 4.2 4.2 Z" fill="#505050"/></svg><span class="tt" style="left:79px">Security Blob […]: a181c43081c1a0030a0101a10c060a2b06010401823702020aa281ab0481a84e544c4d53535000</span></div>
<div class="tr" style="top:262px;height:18px"><div class="thl" style="left:100px;right:0;height:18px"></div><svg class="ta" style="left:82.2px;top:6px" width="9.6" height="4.4" viewBox="0 0 9.6 4.4"><path d="M0 0 H9.6 L5.4 4.2 Q4.8 4.6 4.2 4.2 Z" fill="#505050"/></svg><span class="tt" style="left:104px">GSS-API Generic Security Service Application Program Interface</span></div>
<div class="tr" style="top:280px;height:17px"><div class="thl" style="left:125px;right:0;height:17px"></div><svg class="ta" style="left:107.2px;top:6px" width="9.6" height="4.4" viewBox="0 0 9.6 4.4"><path d="M0 0 H9.6 L5.4 4.2 Q4.8 4.6 4.2 4.2 Z" fill="#505050"/></svg><span class="tt" style="left:129px">Simple Protected Negotiation</span></div>
<div class="tr" style="top:297px;height:18px"><svg class="ta" style="left:132.2px;top:6px" width="9.6" height="4.4" viewBox="0 0 9.6 4.4"><path d="M0 0 H9.6 L5.4 4.2 Q4.8 4.6 4.2 4.2 Z" fill="#505050"/></svg><span class="tt" style="left:154px">negTokenTarg</span></div>
<div class="tr" style="top:315px;height:17px"><span class="tt" style="left:179px">negResult: accept-incomplete (1)</span></div>
<div class="tr" style="top:332px;height:18px"><span class="tt" style="left:179px">supportedMech: 1.3.6.1.4.1.311.2.2.10 (NTLMSSP - Microsoft NTLM Security Support Provider)</span></div>
<div class="tr" style="top:350px;height:17px"><span class="tt" style="left:179px">responseToken […]: 4e544c4d5353500002000000100010003800000015828ae2e87c97ead5776bbe</span></div>
<div class="tr" style="top:367px;height:18px"><div class="thl" style="left:175px;right:0;height:18px"></div><svg class="ta" style="left:157.2px;top:6px" width="9.6" height="4.4" viewBox="0 0 9.6 4.4"><path d="M0 0 H9.6 L5.4 4.2 Q4.8 4.6 4.2 4.2 Z" fill="#505050"/></svg><span class="tt" style="left:179px">NTLM Secure Service Provider</span></div>
<div class="tr" style="top:385px;height:17px"><span class="tt" style="left:204px">NTLMSSP identifier: NTLMSSP</span></div>
<div class="tr" style="top:402px;height:18px"><span class="tt" style="left:204px">NTLM Message Type: NTLMSSP_CHALLENGE (0x00000002)</span></div>
<div class="tr" style="top:420px;height:17px"><div class="tsel" style="left:0;right:0;height:17px"></div><svg class="ta" style="left:182.2px;top:6px" width="9.6" height="4.4" viewBox="0 0 9.6 4.4"><path d="M0 0 H9.6 L5.4 4.2 Q4.8 4.6 4.2 4.2 Z" fill="#1b2d40"/></svg><span class="tt w" style="left:204px">Target Name: SALES-PC</span></div>
<div class="tr" style="top:437px;height:18px"><span class="tt" style="left:229px">Length: 16</span></div>
<div class="tr" style="top:455px;height:17px"><span class="tt" style="left:229px">Maxlen: 16</span></div>
<div class="tr" style="top:472px;height:18px"><span class="tt" style="left:229px">Offset: 56</span></div>
<div class="tr" style="top:490px;height:17px"><svg class="ta" style="left:185px;top:3px" width="6" height="10" viewBox="0 0 6 10"><path d="M0 0 L5.5 5 L0 10 Z" fill="#505050"/></svg><span class="tt" style="left:204px">Negotiate Flags: 0xe28a8215, Negotiate 56, Negotiate Key Exchange, Negotiate 128, Negotiate Version</span></div>
<div class="tr" style="top:507px;height:18px"><span class="tt" style="left:204px">NTLM Server Challenge: e87c97ead5776bbe</span></div>
<div class="tr" style="top:525px;height:17px"><span class="tt" style="left:204px">Reserved: 0000000000000000</span></div>
  </div>
  <!-- vscroll -->
  <div class="abs groove" style="left:827px;top:0;width:16px;height:530px"></div>
  <div class="abs btn" style="left:827px;top:0;width:16px;height:15.5px"></div>
  <svg class="abs" style="left:830.8px;top:6.2px" width="9.4" height="4.8" viewBox="0 0 9.4 4.8"><path d="M0 4.8 H9.4 L4.7 0.2 Z" fill="#505050"/></svg>
  <div class="abs sliderv" style="left:827px;top:260px;width:16px;height:229.5px"></div>
  <div class="abs btn" style="left:827px;top:511.4px;width:16px;height:17.2px"></div>
  <svg class="abs" style="left:830.8px;top:517.9px" width="9.4" height="4.9" viewBox="0 0 9.4 4.9"><path d="M0 0 H9.4 L4.7 4.7 Z" fill="#505050"/></svg>
  <div class="abs" style="left:826px;top:528.6px;width:18px;height:19px;background:#efefef"></div>
  <!-- hscroll -->
  <div class="abs groove" style="left:0;top:530.3px;width:826px;height:16.7px"></div>
  <div class="abs slider" style="left:16.5px;top:530.3px;width:284px;height:15.7px"></div>
  <div class="abs btn" style="left:0.5px;top:530.3px;width:16.5px;height:15.7px"></div>
  <svg class="abs" style="left:5.6px;top:533.6px" width="5.4" height="9.6" viewBox="0 0 5.4 9.6"><path d="M5.4 0 V9.6 L0.2 4.8 Z" fill="#505050"/></svg>
  <div class="abs btn" style="left:808.3px;top:530.3px;width:17.5px;height:15.7px"></div>
  <svg class="abs" style="left:815.3px;top:533.6px" width="5.4" height="9.6" viewBox="0 0 5.4 9.6"><path d="M0 0 V9.6 L5.2 4.8 Z" fill="#505050"/></svg>
</div></div>

<!-- hex -->
<div id="hexbt" class="abs"></div><div id="hexbl" class="abs"></div><div id="hexbr" class="abs"></div><div id="hexbb" class="abs"></div>
<div id="hex" class="abs">
  <div id="hexoff" class="abs"></div>
<div class="hr" style="top:0px;height:17px"><span class="ho" style="left:8px">0000</span><span class="hx" style="left:61.928px">00 0c 29 06 cc 75 00 0c  29 59 23 50 08 00 45 00</span><span class="hx" style="left:520.316px">··)··u·· )Y#P··E·</span></div>
<div class="hr" style="top:17px;height:18px"><span class="ho" style="left:8px">0010</span><span class="hx" style="left:61.928px">01 3b f0 b0 40 00 80 06  f4 05 0a 00 00 85 0a 00</span><span class="hx" style="left:520.316px">·;··@··· ········</span></div>
<div class="hr" style="top:35px;height:17px"><span class="ho" style="left:8px">0020</span><span class="hx" style="left:61.928px">00 82 01 bd c2 20 d8 89  63 c2 dd ef 90 37 50 18</span><span class="hx" style="left:520.316px">····· ·· c····7P·</span></div>
<div class="hr" style="top:52px;height:18px"><div class="hp" style="left:339.556px;width:155.796px;height:18px"></div><div class="hp" style="left:619.184px;width:55.928px;height:18px"></div><span class="ho" style="left:8px">0030</span><span class="hx" style="left:61.928px">20 12 25 3c 00 00 00 00  01 0f fe 53 4d 42 40 00</span><span class="hx" style="left:520.316px"> ·%&lt;···· ···SMB@·</span></div>
<div class="hr" style="top:70px;height:17px"><div class="hp" style="left:60.928px;width:434.424px;height:17px"></div><div class="hp" style="left:520.316px;width:154.79599999999994px;height:17px"></div><span class="ho" style="left:8px">0040</span><span class="hx" style="left:61.928px">01 00 16 00 00 c0 01 00  01 00 11 00 00 00 00 00</span><span class="hx" style="left:520.316px">········ ········</span></div>
<div class="hr" style="top:87px;height:18px"><div class="hp" style="left:60.928px;width:434.424px;height:18px"></div><div class="hp" style="left:520.316px;width:154.79599999999994px;height:18px"></div><span class="ho" style="left:8px">0050</span><span class="hx" style="left:61.928px">00 00 02 00 00 00 00 00  00 00 ff fe 00 00 00 00</span><span class="hx" style="left:520.316px">········ ········</span></div>
<div class="hr" style="top:105px;height:17px"><div class="hp" style="left:60.928px;width:434.424px;height:17px"></div><div class="hp" style="left:520.316px;width:154.79599999999994px;height:17px"></div><span class="ho" style="left:8px">0060</span><span class="hx" style="left:61.928px">00 00 39 00 00 00 00 30  00 00 00 00 00 00 00 00</span><span class="hx" style="left:520.316px">··9····0 ········</span></div>
<div class="hr" style="top:122px;height:18px"><div class="hp" style="left:60.928px;width:434.424px;height:18px"></div><div class="hp" style="left:520.316px;width:154.79599999999994px;height:18px"></div><span class="ho" style="left:8px">0070</span><span class="hx" style="left:61.928px">00 00 00 00 00 00 00 00  00 00 09 00 00 00 48 00</span><span class="hx" style="left:520.316px">········ ······H·</span></div>
<div class="hr" style="top:140px;height:17px"><div class="hp" style="left:60.928px;width:434.424px;height:17px"></div><div class="hp" style="left:520.316px;width:154.79599999999994px;height:17px"></div><span class="ho" style="left:8px">0080</span><span class="hx" style="left:61.928px">c7 00 a1 81 c4 30 81 c1  a0 03 0a 01 01 a1 0c 06</span><span class="hx" style="left:520.316px">·····0·· ········</span></div>
<div class="hr" style="top:157px;height:18px"><div class="hp" style="left:60.928px;width:434.424px;height:18px"></div><div class="hp" style="left:520.316px;width:154.79599999999994px;height:18px"></div><span class="ho" style="left:8px">0090</span><span class="hx" style="left:61.928px">0a 2b 06 01 04 01 82 37  02 02 0a a2 81 ab 04 81</span><span class="hx" style="left:520.316px">·+·····7 ········</span></div>
<div class="hr" style="top:175px;height:17px"><div class="hp" style="left:60.928px;width:434.424px;height:17px"></div><div class="hp" style="left:520.316px;width:154.79599999999994px;height:17px"></div><span class="ho" style="left:8px">00a0</span><span class="hx" style="left:61.928px">a8 4e 54 4c 4d 53 53 50  00 02 00 00 00 10 00 10</span><span class="hx" style="left:520.316px">·NTLMSSP ········</span></div>
<div class="hr" style="top:192px;height:18px"><div class="hp" style="left:60.928px;width:434.424px;height:18px"></div><div class="hp" style="left:520.316px;width:154.79599999999994px;height:18px"></div><span class="ho" style="left:8px">00b0</span><span class="hx" style="left:61.928px">00 38 00 00 00 15 82 8a  e2 e8 7c 97 ea d5 77 6b</span><span class="hx" style="left:520.316px">·8······ ··|···wk</span></div>
<div class="hr" style="top:210px;height:17px"><div class="hp" style="left:60.928px;width:434.424px;height:17px"></div><div class="hp" style="left:520.316px;width:154.79599999999994px;height:17px"></div><span class="ho" style="left:8px">00c0</span><span class="hx" style="left:61.928px">be 00 00 00 00 00 00 00  00 60 00 60 00 48 00 00</span><span class="hx" style="left:520.316px">········ ·`·`·H··</span></div>
<div class="hr" style="top:227px;height:18px"><div class="hp" style="left:60.928px;width:434.424px;height:18px"></div><div class="hp" style="left:520.316px;width:154.79599999999994px;height:18px"></div><div class="hs" style="left:312.592px;width:182.76px;height:18px"></div><div class="hs" style="left:610.1959999999999px;width:64.91600000000005px;height:18px"></div><span class="ho d" style="left:8px">00d0</span><span class="hx" style="left:61.928px">00 0a 00 61 4a 00 00 00  0f</span><span class="hx w" style="left:313.592px">53 00 41 00 4c 00 45</span><span class="hx" style="left:520.316px">···aJ··· ·</span><span class="hx w" style="left:610.1959999999999px">S·A·L·E</span></div>
<div class="hr" style="top:245px;height:17px"><div class="hp" style="left:60.928px;width:434.424px;height:17px"></div><div class="hp" style="left:520.316px;width:154.79599999999994px;height:17px"></div><div class="hs" style="left:60.928px;width:244.176px;height:17px"></div><div class="hs" style="left:520.316px;width:89.87999999999988px;height:17px"></div><span class="ho d" style="left:8px">00e0</span><span class="hx w" style="left:61.928px">00 53 00 2d 00 50 00 43  00</span><span class="hx" style="left:313.592px">02 00 10 00 53 00 41</span><span class="hx w" style="left:520.316px">·S·-·P·C ·</span><span class="hx" style="left:610.1959999999999px">····S·A</span></div>
<div class="hr" style="top:262px;height:18px"><div class="hp" style="left:60.928px;width:434.424px;height:18px"></div><div class="hp" style="left:520.316px;width:154.79599999999994px;height:18px"></div><span class="ho" style="left:8px">00f0</span><span class="hx" style="left:61.928px">00 4c 00 45 00 53 00 2d  00 50 00 43 00 01 00 10</span><span class="hx" style="left:520.316px">·L·E·S·- ·P·C····</span></div>
<div class="hr" style="top:280px;height:17px"><div class="hp" style="left:60.928px;width:434.424px;height:17px"></div><div class="hp" style="left:520.316px;width:154.79599999999994px;height:17px"></div><span class="ho" style="left:8px">0100</span><span class="hx" style="left:61.928px">00 53 00 41 00 4c 00 45  00 53 00 2d 00 50 00 43</span><span class="hx" style="left:520.316px">·S·A·L·E ·S·-·P·C</span></div>
<div class="hr" style="top:297px;height:18px"><div class="hp" style="left:60.928px;width:434.424px;height:18px"></div><div class="hp" style="left:520.316px;width:154.79599999999994px;height:18px"></div><span class="ho" style="left:8px">0110</span><span class="hx" style="left:61.928px">00 04 00 10 00 53 00 61  00 6c 00 65 00 73 00 2d</span><span class="hx" style="left:520.316px">·····S·a ·l·e·s·-</span></div>
<div class="hr" style="top:315px;height:17px"><div class="hp" style="left:60.928px;width:434.424px;height:17px"></div><div class="hp" style="left:520.316px;width:154.79599999999994px;height:17px"></div><span class="ho" style="left:8px">0120</span><span class="hx" style="left:61.928px">00 50 00 43 00 03 00 10  00 53 00 61 00 6c 00 65</span><span class="hx" style="left:520.316px">·P·C···· ·S·a·l·e</span></div>
<div class="hr" style="top:332px;height:18px"><div class="hp" style="left:60.928px;width:434.424px;height:18px"></div><div class="hp" style="left:520.316px;width:154.79599999999994px;height:18px"></div><span class="ho" style="left:8px">0130</span><span class="hx" style="left:61.928px">00 73 00 2d 00 50 00 43  00 07 00 08 00 cb 9d 8e</span><span class="hx" style="left:520.316px">·s·-·P·C ········</span></div>
<div class="hr" style="top:350px;height:17px"><div class="hp" style="left:60.928px;width:244.176px;height:17px"></div><div class="hp" style="left:520.316px;width:89.87999999999988px;height:17px"></div><span class="ho" style="left:8px">0140</span><span class="hx" style="left:61.928px">70 16 fc d9 01 00 00 00  00</span><span class="hx" style="left:520.316px">p······· ·</span></div>
</div>

<div id="status" class="abs">
  <div class="abs" style="left:15px;top:4px;width:18px;height:18px;border-radius:50%;background:radial-gradient(circle at 40% 35%,#eaea80,#dede58);border:1.2px solid #75753a"></div>
  <div class="abs" style="left:43.7px;top:4.2px;width:10.6px;height:4.2px;background:linear-gradient(90deg,#4aaee6,#1f96dc)"></div>
  <div class="abs" style="left:43.7px;top:8.4px;width:10.6px;height:4px;background:#f4f4f2"></div>
  <svg class="abs" style="left:39.5px;top:4px" width="24" height="8" viewBox="0 0 24 8"><path d="M8.7 8 L11.7 1.6 L13.5 5.2 L15 8 Z" fill="#f8f8f4"/><path d="M21.3 1.6 L13 9.5" stroke="#555753" stroke-width="3.3" stroke-linecap="round"/></svg>
  <div class="st" style="left:82.3px;top:6.3px;font-size:15.7px">Target Name (ntlmssp.challenge.target_name), 16 bytes</div>
  <div class="abs" style="left:1082px;top:6px;width:1px;height:6px;background:repeating-linear-gradient(#a8a8a8 0 1px,transparent 1px 3.7px)"></div>
  <div class="st" style="left:1100px;top:5.6px;font-size:15px">Packets: 40294 · Displayed: 27 (0.1%)</div>
  <div class="abs" style="left:1542px;top:6px;width:1px;height:6px;background:repeating-linear-gradient(#a8a8a8 0 1px,transparent 1px 3.7px)"></div>
  <div class="st" style="left:1560.3px;top:6.3px;font-size:15.8px">Profile: Default</div>
</div>
<div id="wl" class="abs"></div><div id="bl" class="abs"></div>
<div id="bl2" class="abs"></div><div id="br2" class="abs"></div><div id="br" class="abs"></div><div id="wr" class="abs"></div>

</div>
</body></html>
